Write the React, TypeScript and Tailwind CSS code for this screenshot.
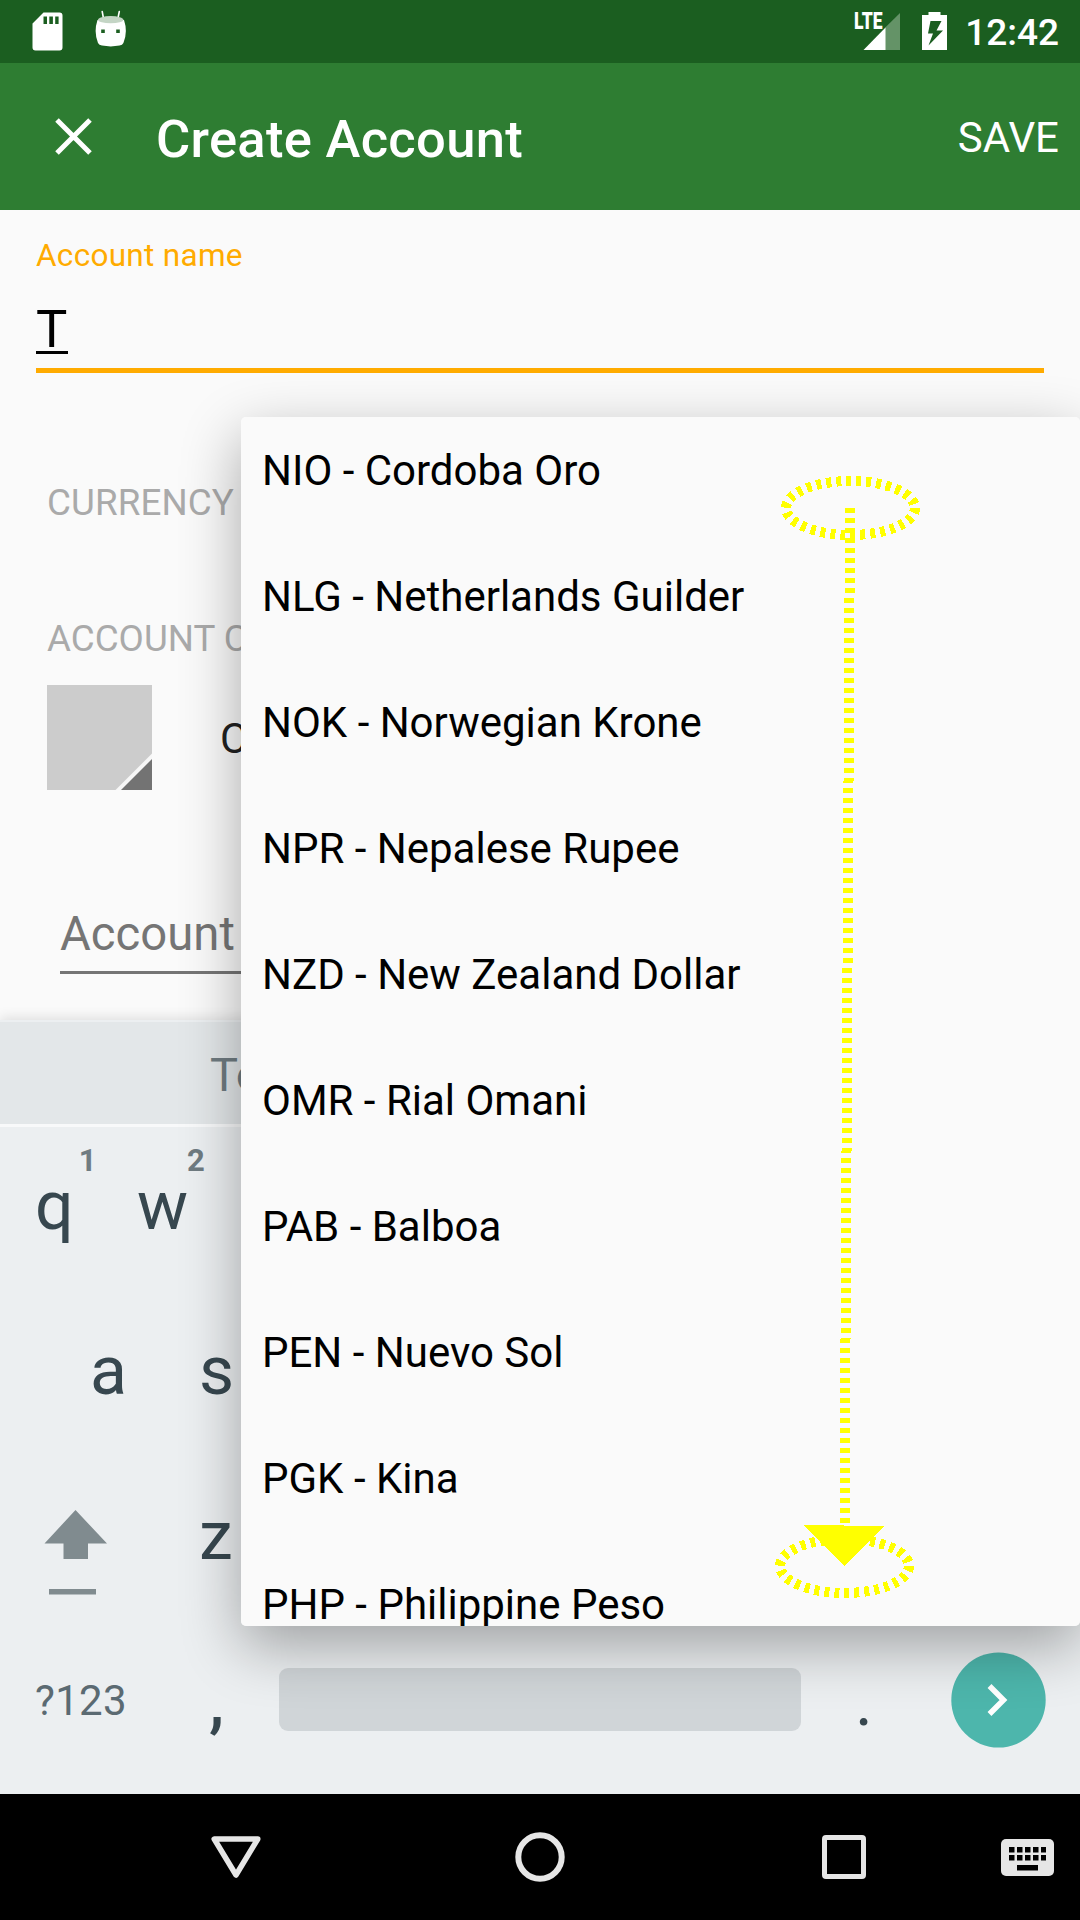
import React from "react";

const currencies = [
  "NIO - Cordoba Oro",
  "NLG - Netherlands Guilder",
  "NOK - Norwegian Krone",
  "NPR - Nepalese Rupee",
  "NZD - New Zealand Dollar",
  "OMR - Rial Omani",
  "PAB - Balboa",
  "PEN - Nuevo Sol",
  "PGK - Kina",
  "PHP - Philippine Peso",
];

function StatusBar() {
  return (
    <div className="flex h-[63px] items-start bg-[#1b5e20] text-white">
      <svg className="ml-[32px] mt-[12px] h-[39px] w-[31px]" viewBox="0 0 31 39" fill="white">
        <path
          fillRule="evenodd"
          d="M11.5 0.5H27.5Q30.5 0.5 30.5 3.5V35.5Q30.5 38.5 27.5 38.5H3.5Q0.5 38.5 0.5 35.5V11.5ZM11.5 4.5V12H15V4.5ZM17.3 4.5V12H20.9V4.5ZM23.2 4.5V12H26.6V4.5Z"
        />
      </svg>
      <svg className="ml-[32px] mt-[10px] h-[37px] w-[32px]" viewBox="0 0 32 37" fill="none">
        <path d="M7.2 1.5L8.6 9M24.3 1.5L22.8 9" stroke="white" strokeWidth="1.6" strokeLinecap="round" />
        <path
          fillRule="evenodd"
          fill="white"
          d="M2.5 10Q-1.5 22 3 33Q4 35 7 35.6Q15.7 37.2 24.5 35.6Q27.5 35 28.4 33Q33 22 29 10ZM6.2 19.5h3.6v3.6h-3.6zM21.2 19.5h3.6v3.6h-3.6z"
        />
        <ellipse cx="15.7" cy="9.7" rx="12.7" ry="3.6" fill="#c4d5c5" />
      </svg>
      <div className="relative ml-auto mt-[13px] h-[37px] w-[45px]">
        <svg className="h-[37px] w-[45px]" viewBox="0 0 45 37">
          <path d="M45 0V37H30V14.7Z" fill="#649367" />
          <path d="M30.5 14.5V37H8.5Z" fill="white" />
        </svg>
        <span className="absolute -left-px top-0 origin-left scale-x-[0.76] text-[23px] font-black leading-[17px]">LTE</span>
      </div>
      <svg className="ml-[22px] mt-[12px] h-[38px] w-[25px]" viewBox="0 0 25 38" fill="white">
        <path fillRule="evenodd" d="M6.5 0H18.5V3H25V38H0V3H6.5ZM8.5 9L6 21.5H11L6.500 33.500L21 18.500H14.500L19.500 9Z" />
      </svg>
      <span className="ml-[18px] mr-[21px] mt-[12px] text-[37px] font-medium leading-[42px]">12:42</span>
    </div>
  );
}

function AppBar() {
  return (
    <div className="flex h-[147px] items-center bg-[#2e7d32] text-white">
      <svg className="ml-[55px] h-[37px] w-[37px]" viewBox="0 0 37 37" stroke="white" strokeWidth="5">
        <path d="M2 2L35 35M35 2L2 35" />
      </svg>
      <h1 className="ml-[64px] mt-[4px] text-[52.5px] font-medium leading-[60px] tracking-[0.3px]">Create Account</h1>
      <span className="ml-auto mr-[21px] mt-[3px] text-[42px] leading-[48px]">SAVE</span>
    </div>
  );
}

function Form() {
  return (
    <div className="h-[811px] overflow-hidden">
      <div className="mx-[36px] flex h-[163px] flex-col border-b-[5px] border-[#ffab00]">
        <span className="mt-[27px] text-[31.5px] leading-[37px] tracking-[0.3px] text-[#ffab00]">Account name</span>
        <span className="mt-[24px] h-[56px] w-[32px] border-b-[3px] border-black text-[52.5px] leading-[62px] text-black">T</span>
      </div>
      <div className="ml-[47px] mt-[108px] text-[36.75px] leading-[44px] tracking-[0.1px] text-[#aaa]">CURRENCY</div>
      <div className="ml-[47px] mt-[92px] text-[36.75px] leading-[44px] text-[#aaa]">ACCOUNT C</div>
      <div className="ml-[47px] mt-[24px] flex items-center">
        <svg className="h-[105px] w-[105px]" viewBox="0 0 105 105">
          <path d="M0 0H105V105H0Z" fill="#ccc" />
          <path d="M105 68.5V105H68.5Z" fill="#f7f7f7" />
          <path d="M105 74V105H74Z" fill="#737373" />
        </svg>
        <span className="ml-[68px] mt-[3px] text-[42px] leading-[48px] text-[#212121]">C</span>
      </div>
      <div className="ml-[60px] mt-[116px] h-[68px] border-b-[3px] border-[#757575] text-[47.25px] leading-[57px] text-[#757575]">
        Account
      </div>
    </div>
  );
}

function Keyboard() {
  return (
    <div className="flex h-[774px] flex-col bg-[#eceff1] text-[68px] text-[#37474f] shadow-[0_-2px_12px_rgba(0,0,0,0.12)]">
      <div className="h-[107px] border-b-[3px] border-t-[2px] border-b-[#f8f9fa] border-t-[#eceff1] bg-[#e3e7e9] pl-[210px]">
        <span className="block pt-[25px] text-[47px] leading-[56px] text-[#6f7b81]">To</span>
      </div>
      <div className="flex h-[133px] pl-[35px]">
        <div className="flex w-[102px]">
          <span className="mt-[39px] leading-[80px]">q</span>
          <span className="ml-[5px] mt-[16px] text-[31px] font-bold leading-[36px] text-[#6f7b81]">1</span>
        </div>
        <div className="flex">
          <span className="mt-[39px] leading-[80px]">w</span>
          <span className="-ml-px mt-[16px] text-[31px] font-bold leading-[36px] text-[#6f7b81]">2</span>
        </div>
      </div>
      <div className="flex h-[165px] pl-[90px] pt-[71px] leading-[80px]">
        <span className="w-[109px]">a</span>
        <span>s</span>
      </div>
      <div className="flex h-[165px]">
        <svg className="ml-[44px] mt-[85px] h-[86px] w-[64px] shrink-0" viewBox="0 0 64 86" fill="#808b8f">
          <path d="M31.5 0L63 33.5H44V49H19.5V33.5H0.5ZM5 79H52V84.500H5Z" />
        </svg>
        <span className="ml-[91px] mt-[71px] leading-[80px]">z</span>
      </div>
      <div className="flex grow items-start">
        <span className="ml-[35px] mt-[87px] w-[174px] text-[42px] leading-[48px] tracking-[0.3px] text-[#5b6a72]">?123</span>
        <span className="mt-[72px] w-[70px] font-medium leading-[80px]">,</span>
        <div className="mt-[78px] h-[63px] w-[522px] rounded-[9px] bg-[#d0d5d8]" />
        <span className="ml-[54px] mt-[72px] w-[96px] leading-[80px]">.</span>
        <svg className="mt-[62px] h-[96px] w-[95px]" viewBox="0 0 95 96">
          <ellipse cx="47.5" cy="48" rx="47.2" ry="47.5" fill="#4db6ac" />
          <path d="M38.5 34L52.500 48L38.500 62" fill="none" stroke="white" strokeWidth="5.5" />
        </svg>
      </div>
    </div>
  );
}

function NavigationBar() {
  return (
    <div className="relative flex h-[126px] items-start bg-black">
      <svg className="ml-[211px] mt-[42px] h-[42px] w-[50px]" viewBox="0 0 50 42" fill="none" stroke="#e6e6e6" strokeWidth="5.5" strokeLinejoin="round">
        <path d="M3.2 3H46.800L25 39Z" />
      </svg>
      <svg className="ml-[254px] mt-[38px] h-[50px] w-[50px]" viewBox="0 0 50 50" fill="none" stroke="#e6e6e6" strokeWidth="6">
        <circle cx="25" cy="25" r="21.7" />
      </svg>
      <svg className="ml-[257px] mt-[41px] h-[44px] w-[44px]" viewBox="0 0 44 44" fill="none" stroke="#e6e6e6" strokeWidth="5">
        <rect x="2.5" y="2.5" width="39" height="39" rx="1.5" />
      </svg>
      <svg className="ml-[135px] mt-[45px] h-[37px] w-[53px]" viewBox="0 0 53 37">
        <rect width="53" height="37" rx="5" fill="#e6e6e6" />
        <path
          d="M8 8h5.5v5.5H8zM16 8h5.5v5.5H16zM24 8h5.5v5.5H24zM32 8h5.5v5.5H32zM40 8h5v5.5H40zM8 16h5.5v5.5H8zM16 16h5.5v5.5H16zM24 16h5.5v5.5H24zM32 16h5.5v5.5H32zM40 16h5v5.5H40zM16 26h21v5.5H16z"
          fill="black"
        />
      </svg>
    </div>
  );
}

function CurrencyMenu() {
  return (
    <div className="absolute left-[241px] top-[417px] h-[1209px] w-[839px] rounded-[5px] shadow-[0_20px_60px_rgba(0,0,0,0.33)]">
      <ul className="h-full overflow-hidden rounded-[5px] bg-[#fafafa]">
        {currencies.map((name) => (
          <li key={name} className="flex h-[126px] items-start whitespace-pre pl-[21px] pt-[30px] text-[42px] leading-[48px] text-black">
            {name}
          </li>
        ))}
      </ul>
      <svg
        className="absolute left-[529px] top-[54px] h-[1132px] w-[150px]"
        viewBox="770 471 150 1132"
        fill="none"
        stroke="#ffff00"
        strokeWidth="10"
        shapeRendering="crispEdges"
        overflow="visible"
      >
        <ellipse cx="850.5" cy="508" rx="64.5" ry="27" strokeDasharray="5 5" />
        <path d="M850 508L844.5 1526" strokeDasharray="5 5" />
        <ellipse cx="844.5" cy="1566" rx="64.5" ry="27" strokeDasharray="5 5" />
        <path d="M804 1525L884.5 1526L844.5 1566Z" fill="#ffff00" stroke="none" />
      </svg>
    </div>
  );
}

export default function App() {
  return (
    <main className="relative h-[1920px] w-[1080px] overflow-hidden bg-[#fafafa] font-['Roboto',sans-serif]">
      <StatusBar />
      <AppBar />
      <Form />
      <div className="relative -mt-px">
        <Keyboard />
      </div>
      <NavigationBar />
      <CurrencyMenu />
    </main>
  );
}
